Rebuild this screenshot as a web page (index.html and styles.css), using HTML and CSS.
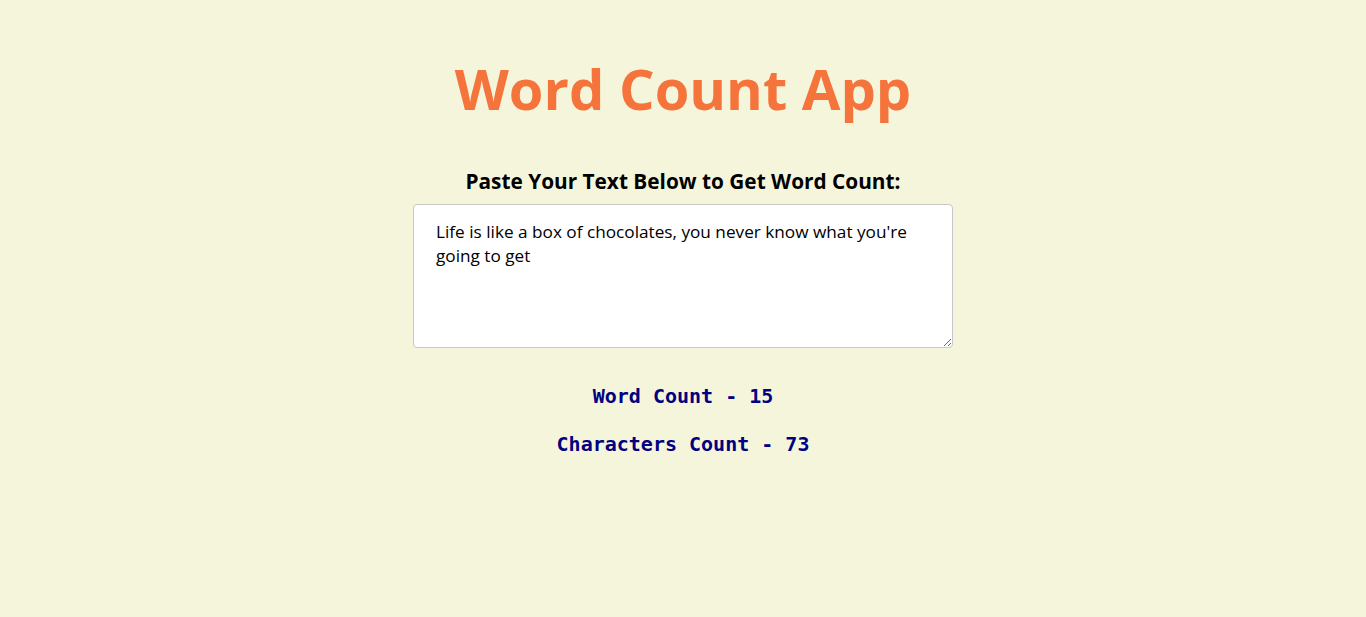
FILE: index.html
```html
<!DOCTYPE html>
<html>
<head>
<meta charset="utf-8">
<link rel="stylesheet" href="styles.css">
</head>
<body>
<main class="app">
  <h1 class="title">Word Count App</h1>
  <h3 class="label">Paste Your Text Below to Get Word Count:</h3>
  <textarea class="input">Life is like a box of chocolates, you never know what you're going to get</textarea>
  <p class="stat">Word Count - 15</p>
  <p class="stat">Characters Count - 73</p>
</main>
</body>
</html>
```
FILE: styles.css
```css
html, body {
  margin: 0;
  padding: 0;
  background: #f5f5dc;
  height: 100%;
}
.app {
  display: flex;
  flex-direction: column;
  align-items: center;
  padding-top: 52px;
}
.title {
  margin: 0;
  font-family: "Open Sans", "Liberation Sans", sans-serif;
  font-weight: 700;
  font-size: 56px;
  line-height: 72px;
  color: #f4743b;
}
.label {
  margin: 44px 0 10px;
  font-family: "Open Sans", "Noto Sans", sans-serif;
  font-weight: 700;
  font-size: 20.8px;
  line-height: 26px;
  color: #000;
}
.input {
  box-sizing: border-box;
  width: 540px;
  height: 144px;
  padding: 15px 22px;
  border: 1px solid #c8c8c8;
  border-radius: 4px;
  background: #fff;
  font-family: "Open Sans", "Noto Sans", sans-serif;
  font-size: 17.2px;
  line-height: 24px;
  color: #000;
  resize: vertical;
}
.stat {
  margin: 0;
  font-family: "DejaVu Sans Mono", "Liberation Mono", monospace;
  font-weight: 700;
  font-size: 20px;
  line-height: 24px;
  color: #000080;
}
.input + .stat {
  margin-top: 36px;
}
.stat + .stat {
  margin-top: 24px;
}
```
